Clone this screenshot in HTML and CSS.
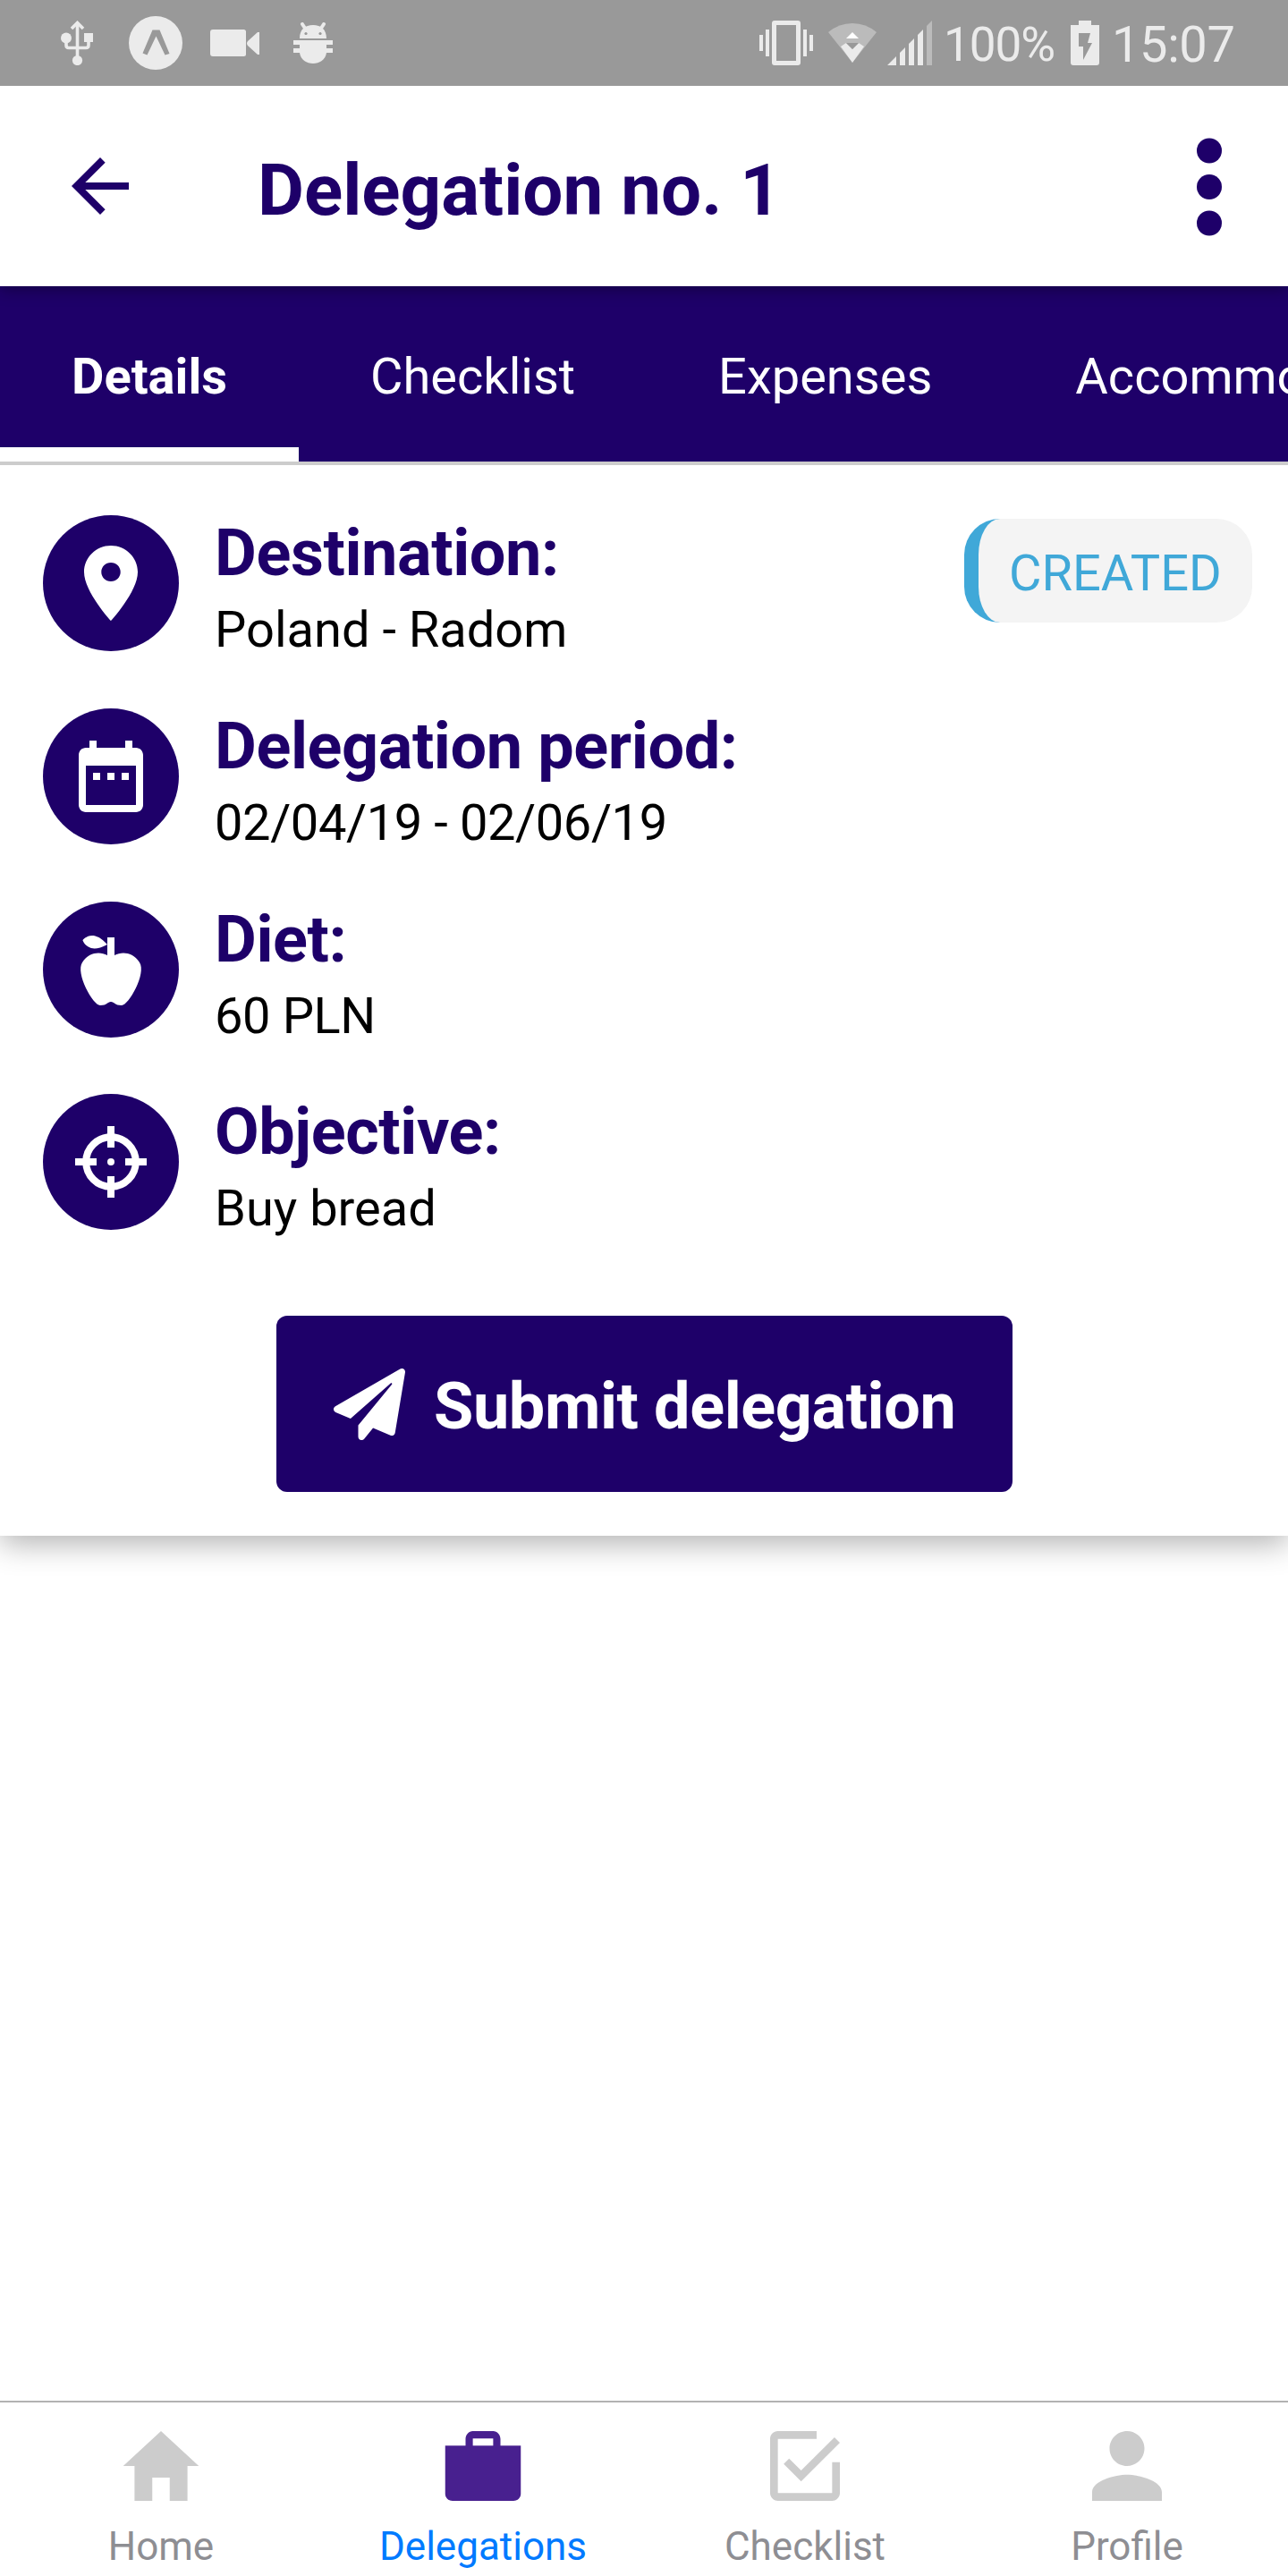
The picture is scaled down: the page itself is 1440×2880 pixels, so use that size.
FILE: index.html
```html
<!DOCTYPE html>
<html lang="en">
<head>
<meta charset="utf-8">
<title>Delegation no. 1</title>
<link rel="stylesheet" href="styles.css">
</head>
<body>
<div class="screen">
  <div class="status">
    <div class="status-left">
      <svg class="ic-usb" width="36" height="50" viewBox="0 0 36 50"><g fill="none" stroke="#ebebeb" stroke-width="3.6"><path d="M18.500 3v40M6 20v7.500q0 3 3 3h19q3 0 3-3V22"/><path d="M12 9l6.500-6.500L25 9"/></g><g fill="#ebebeb"><circle cx="6" cy="19.500" r="6"/><path d="M26 14h10v10H26z"/><circle cx="18.500" cy="44.500" r="5.600"/></g></svg>
      <svg class="ic-expo" width="60" height="60" viewBox="0 0 60 60"><circle cx="30" cy="30" r="30" fill="#ebebeb"/><path d="M26.500 15.500h8L45.500 42l-5 1.500-10-21-10 21-5-2z" fill="#999"/></svg>
      <svg class="ic-video" width="55" height="30" viewBox="0 0 55 30"><path fill="#ebebeb" d="M3 0h34.500q2.500 0 2.500 2.500v25q0 2.500-2.500 2.500H3q-3 0-3-3V3q0-3 3-3zM53 3h2v25h-2L42 18q-2-2.500 0-5z"/></svg>
      <svg class="ic-bug" width="44" height="46" viewBox="0 0 44 46"><g fill="#ebebeb"><path d="M7 18C7 8 13 3 22 3s15 5 15 15zM0 20h44v5h-7v4h7v5h-7C36 42 29 46 22 46S8 42 7 34H0v-5h7v-4H0z"/><path d="M10 2l4 6M34 2l-4 6" stroke="#ebebeb" stroke-width="4" stroke-linecap="round"/></g><circle cx="14" cy="12.500" r="1.600" fill="#999"/><circle cx="30" cy="12.500" r="1.600" fill="#999"/></svg>
    </div>
    <div class="status-right">
      <svg class="ic-vib" width="60" height="50" viewBox="0 0 60 50"><path fill="#ebebeb" fill-rule="evenodd" d="M17 0h26q3 0 3 3v44q0 3-3 3H17q-3 0-3-3V3q0-3 3-3zM19 5v40h22V5zM0 16h4v18H0zM7 10h4v30H7zM49 10h4v30h-4zM56 16h4v18h-4z"/></svg>
      <svg class="ic-wifi" width="54" height="44" viewBox="0 0 54 44"><path fill="#bbb" d="M0 10Q12 0 27 0t27 10L27 44z"/><path fill="#ebebeb" d="M14 26l6-4 7 7 7-7 6 4-13 18z"/><path fill="#999" d="M20 22h14l-7 7z"/><path fill="#fff" d="M20 17h14l-7-7z"/></svg>
      <svg class="ic-signal" width="51" height="50" viewBox="0 0 51 50"><path fill="#ebebeb" d="M0 50L10 40v10zM14 36l6-6v20h-6zM24 26l6-6v30h-6zM34 16l6-6v40h-6z"/><path fill="#bbb" d="M44 6l6-6v50h-6z"/></svg>
      <span class="percent">100%</span>
      <svg class="ic-batt" width="32" height="50" viewBox="0 0 32 50"><path fill="#ebebeb" d="M9 0h14v5h9v42q0 3-3 3H3q-3 0-3-3V5h9z"/><path fill="#999" d="M9 14h13l-3 11h5L14 44V29H9z"/></svg>
      <span class="clock">15:07</span>
    </div>
  </div>

  <header class="header">
    <svg class="back" width="96" height="96" viewBox="0 0 24 24"><path d="M20 11H7.830l5.590-5.590L12 4l-8 8 8 8 1.410-1.410L7.830 13H20v-2z"/></svg>
    <h1 class="title">Delegation no. 1</h1>
    <svg class="more" width="28" height="112" viewBox="0 0 28 112"><circle cx="14" cy="16.500" r="14"/><circle cx="14" cy="57" r="14"/><circle cx="14" cy="97.500" r="14"/></svg>
  </header>

  <nav class="tabs">
    <div class="tab active">Details</div>
    <div class="tab">Checklist</div>
    <div class="tab">Expenses</div>
    <div class="tab">Accommodation</div>
  </nav>

  <main class="card">
    <div class="rows">
      <div class="row">
        <div class="disc"><svg width="96" height="96" viewBox="0 0 512 512"><path d="M256 32c-88.004 0-160 70.557-160 156.801C96 306.400 256 480 256 480s160-173.600 160-291.199C416 102.557 344.004 32 256 32zm0 212.801c-31.996 0-57.144-24.645-57.144-56 0-31.357 25.147-56 57.144-56s57.144 24.643 57.144 56c0 31.355-25.148 56-57.144 56z"/></svg></div>
        <div class="info"><div class="label">Destination:</div><div class="value">Poland - Radom</div></div>
        <div class="badge">CREATED</div>
      </div>
      <div class="row">
        <div class="disc"><svg width="96" height="96" viewBox="0 0 24 24"><path d="M9 11H7v2h2v-2zm4 0h-2v2h2v-2zm4 0h-2v2h2v-2zm2-7h-1V2h-2v2H8V2H6v2H5c-1.110 0-1.990.9-1.990 2L3 20c0 1.100.89 2 2 2h14c1.100 0 2-.9 2-2V6c0-1.100-.9-2-2-2zm0 16H5V9h14v11z"/></svg></div>
        <div class="info"><div class="label">Delegation period:</div><div class="value numeric">02/04/19 - 02/06/19</div></div>
      </div>
      <div class="row">
        <div class="disc"><svg width="96" height="96" viewBox="0 0 24 24"><path d="M20 10C22 13 17 22 15 22S13 21 12 21 11 22 9 22 2 13 4 10 9 7 11 8V5C5.380 8.070 4.110 3.780 4.110 3.780S6.770.19 11 5V3h2v5c2-1 5-1 7 2z"/></svg></div>
        <div class="info"><div class="label">Diet:</div><div class="value numeric">60 PLN</div></div>
      </div>
      <div class="row">
        <div class="disc"><svg width="96" height="96" viewBox="0 0 24 24"><circle cx="12" cy="12" r="6.950" fill="none" stroke="#fff" stroke-width="2"/><circle cx="12" cy="12" r="1"/><path d="M11 2h2v6h-2zM11 16h2v6h-2zM2 11h6v2H2zM16 11h6v2h-6z"/></svg></div>
        <div class="info"><div class="label">Objective:</div><div class="value">Buy bread</div></div>
      </div>
    </div>
    <div class="submit">
      <svg width="80" height="80" viewBox="0 0 512 512"><path d="M476 3.200L12.500 270.600c-18.100 10.400-15.800 35.600 2.200 43.200L121 358.400l287.300-253.200c5.500-4.900 13.300 2.600 8.600 8.300L176 407v80.500c0 23.600 28.500 32.900 42.500 15.800L282 426l124.600 52.200c14.200 6 30.400-2.900 33-18.200l72-432C515 7.800 493.300-6.800 476 3.200z"/></svg>
      <span>Submit delegation</span>
    </div>
  </main>

  <footer class="nav">
    <div class="nav-item">
      <svg width="104" height="104" viewBox="0 0 512 512"><path d="M208 448V320h96v128h97.600V256H464L256 64 48 256h62.400v192z"/></svg>
      <span>Home</span>
    </div>
    <div class="nav-item current">
      <svg width="104" height="104" viewBox="0 0 512 512"><path fill-rule="evenodd" d="M464 144H352v-36c0-24-18-44-40-44H200c-22 0-40 20-40 44v36H48v264c0 22 18 40 40 40h336c22 0 40-18 40-40zM200 144v-40h112v40z"/></svg>
      <span>Delegations</span>
    </div>
    <div class="nav-item">
      <svg width="104" height="104" viewBox="0 0 512 512"><path d="M168.531 215.469l-29.864 29.864 96 96L448 128l-29.864-29.864-183.469 182.395-66.136-65.062zm236.802 189.864H106.667V106.667H320V64H106.667C83.198 64 64 83.198 64 106.667v298.666C64 428.802 83.198 448 106.667 448h298.666C428.802 448 448 428.802 448 405.333V234.667h-42.667v170.666z"/></svg>
      <span>Checklist</span>
    </div>
    <div class="nav-item">
      <svg width="104" height="104" viewBox="0 0 512 512"><path d="M256 256c52.805 0 96-43.201 96-96s-43.195-96-96-96-96 43.201-96 96 43.195 96 96 96zm0 48c-63.598 0-192 32.402-192 96v48h384v-48c0-63.598-128.402-96-192-96z"/></svg>
      <span>Profile</span>
    </div>
  </footer>
</div>
</body>
</html>
```
FILE: styles.css
```css
* { box-sizing: border-box; }
body { margin: 0; font-family: Roboto, sans-serif; background: #fff; }
svg { display: block; flex: none; }

.screen {
  width: 1440px;
  height: 2880px;
  display: flex;
  flex-direction: column;
  overflow: hidden;
}

.status {
  height: 96px;
  flex: none;
  display: flex;
  justify-content: space-between;
  position: relative;
  z-index: 3;
  background: #999;
  color: #ebebeb;
}
.status-left, .status-right { display: flex; align-items: flex-start; }
.status-left { padding-left: 68px; }
.ic-usb { margin-top: 23px; }
.ic-expo { margin: 18px 0 0 40px; }
.ic-video { margin: 33px 0 0 31px; }
.ic-bug { margin: 25px 0 0 38px; }
.status-right { padding-right: 59px; }
.ic-vib { margin-top: 23px; }
.ic-wifi { margin: 26px 0 0 17px; }
.ic-signal { margin: 23px 0 0 12px; }
.percent { width: 124px; margin: 19px 0 0 12px; font-size: 53px; line-height: 62px; letter-spacing: -1px; }
.ic-batt { margin: 23px 0 0 18px; }
.clock { width: 138px; margin: 17px 0 0 14px; font-size: 56px; line-height: 66px; letter-spacing: -0.4px; }

.header {
  height: 224px;
  flex: none;
  display: flex;
  align-items: center;
  padding: 0 74px 0 64px;
  position: relative;
  z-index: 2;
  background: #fff;
  box-shadow: 0 4px 16px rgba(0, 0, 0, 0.35);
  fill: #1e0069;
}
.title {
  flex: 1;
  margin: 10px 0 0 128px;
  font-size: 80px;
  line-height: 94px;
  font-weight: 700;
  color: #1e0069;
}

.tabs {
  height: 200px;
  flex: none;
  display: flex;
  position: relative;
  z-index: 1;
  overflow: hidden;
  background: #1e0069;
  border-bottom: 4px solid #ccc;
}
.tab {
  flex: none;
  padding: 68px 80px 0;
  font-size: 56px;
  line-height: 66px;
  color: #fff;
}
.active { font-weight: 700; border-bottom: 16px solid #fff; }

.card {
  height: 1197px;
  flex: none;
  padding: 56px 40px 0 48px;
  box-shadow: 0 9px 32px rgba(0, 0, 0, 0.3);
}
.rows { display: flex; flex-direction: column; gap: 63.75px; }
.row { display: flex; height: 152px; }
.disc {
  width: 152px;
  height: 152px;
  flex: none;
  display: flex;
  align-items: center;
  justify-content: center;
  border-radius: 50%;
  background: #1e0069;
  fill: #fff;
}
.info { flex: 1; padding: 1px 0 0 40px; }
.label { font-size: 72px; line-height: 84px; font-weight: 700; letter-spacing: -0.4px; color: #1e0069; }
.value { padding-top: 5px; font-size: 56px; line-height: 76px; color: #000; }
.numeric { letter-spacing: -0.4px; }
.badge {
  width: 322px;
  height: 116px;
  margin-top: 4px;
  padding-left: 34px;
  border-left: 16px solid #40a8d8;
  border-radius: 40px;
  background: #f4f4f4;
  color: #40a8d8;
  font-size: 56px;
  line-height: 122px;
}
.submit {
  width: 823px;
  height: 197px;
  margin: 96px 0 0 261px;
  padding-left: 64px;
  display: flex;
  align-items: center;
  gap: 32px;
  border-radius: 12px;
  background: #1e0069;
  color: #fff;
  fill: #fff;
  font-size: 72px;
  font-weight: 700;
  letter-spacing: -0.4px;
  white-space: nowrap;
}
.submit span { padding-top: 6px; }

.nav {
  height: 196px;
  flex: none;
  margin-top: auto;
  display: flex;
  border-top: 2px solid #b2b2b2;
  background: #fff;
}
.nav-item {
  flex: 1;
  display: flex;
  flex-direction: column;
  align-items: center;
  padding-top: 19px;
  font-size: 44px;
  line-height: 52px;
  gap: 12px;
  color: #8e8e93;
  fill: #ccc;
}
.current { color: #007aff; fill: #48208f; }
```
